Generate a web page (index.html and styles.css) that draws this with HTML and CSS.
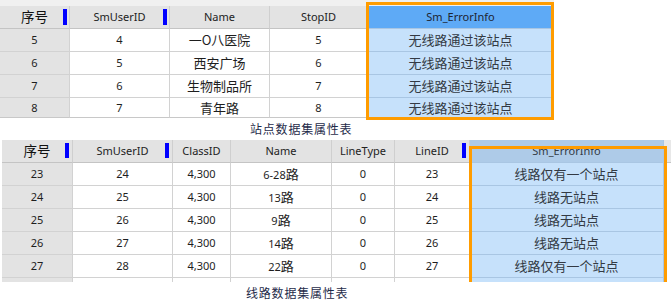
FILE: index.html
```html
<!DOCTYPE html>
<html lang="zh">
<head>
<meta charset="utf-8">
<link rel="stylesheet" href="styles.css">
</head>
<body>
<section class="view view-top">
  <table class="grid grid-top">
    <colgroup>
      <col class="c70"><col class="c100"><col class="c100"><col class="c98"><col class="c186">
    </colgroup>
    <thead>
      <tr>
        <th class="idx"><span class="cn h">序号</span><i class="mark"></i></th>
        <th>SmUserID<i class="mark"></i></th>
        <th>Name</th>
        <th>StopID</th>
        <th class="err sel">Sm_ErrorInfo</th>
      </tr>
    </thead>
    <tbody>
      <tr><td class="idx">5</td><td>4</td><td class="cn">一O八医院</td><td>5</td><td class="err cn">无线路通过该站点</td></tr>
      <tr><td class="idx">6</td><td>5</td><td class="cn">西安广场</td><td>6</td><td class="err cn">无线路通过该站点</td></tr>
      <tr><td class="idx">7</td><td>6</td><td class="cn">生物制品所</td><td>7</td><td class="err cn">无线路通过该站点</td></tr>
      <tr class="last"><td class="idx">8</td><td>7</td><td class="cn">青年路</td><td>8</td><td class="err cn">无线路通过该站点</td></tr>
    </tbody>
  </table>
  <div class="hl hl-top"></div>
</section>
<p class="caption cap-top">站点数据集属性表</p>

<section class="view view-bottom">
  <table class="grid grid-bottom">
    <colgroup>
      <col class="b71"><col class="b100"><col class="b58"><col class="b101"><col class="b63"><col class="b75"><col class="b194"><col class="brest">
    </colgroup>
    <thead>
      <tr>
        <th class="idx"><span class="cn h">序号</span><i class="mark"></i></th>
        <th>SmUserID<i class="mark"></i></th>
        <th>ClassID</th>
        <th>Name</th>
        <th>LineType</th>
        <th>LineID<i class="mark"></i></th>
        <th class="err">Sm_ErrorInfo</th>
        <th class="rest"></th>
      </tr>
    </thead>
    <tbody>
      <tr><td class="idx">23</td><td>24</td><td>4,300</td><td>6-28<span class="cn">路</span></td><td>0</td><td>23</td><td class="err cn">线路仅有一个站点</td><td class="rest"></td></tr>
      <tr><td class="idx">24</td><td>25</td><td>4,300</td><td>13<span class="cn">路</span></td><td>0</td><td>24</td><td class="err cn">线路无站点</td><td class="rest"></td></tr>
      <tr><td class="idx">25</td><td>26</td><td>4,300</td><td>9<span class="cn">路</span></td><td>0</td><td>25</td><td class="err cn">线路无站点</td><td class="rest"></td></tr>
      <tr><td class="idx">26</td><td>27</td><td>4,300</td><td>14<span class="cn">路</span></td><td>0</td><td>26</td><td class="err cn">线路无站点</td><td class="rest"></td></tr>
      <tr><td class="idx">27</td><td>28</td><td>4,300</td><td>22<span class="cn">路</span></td><td>0</td><td>27</td><td class="err cn">线路仅有一个站点</td><td class="rest"></td></tr>
      <tr><td class="idx"></td><td></td><td></td><td></td><td></td><td></td><td class="err"></td><td class="rest"></td></tr>
    </tbody>
  </table>
  <div class="hl hl-bottom"></div>
</section>
<p class="caption cap-bottom">线路数据集属性表</p>
</body>
</html>
```

FILE: styles.css
```css
html, body {
  margin: 0;
  padding: 0;
  background: #ffffff;
}
body {
  width: 671px;
  height: 303px;
  overflow: hidden;
  font-family: "Noto Sans", "Noto Sans CJK SC", sans-serif;
  font-size: 11px;
  color: #1e1e1e;
}
.view {
  position: relative;
  overflow: hidden;
}
.view-top {
  width: 554px;
  height: 120px;
  padding-top: 6px;
  box-sizing: border-box;
  background: linear-gradient(#f0f0f0 0 6px, #ffffff 6px);
}
.view-bottom {
  margin-top: 0;
  height: 142px;
  padding-left: 2px;
}
.grid {
  border-collapse: separate;
  border-spacing: 0;
  table-layout: fixed;
}
.grid-top { width: 554px; }
.grid-bottom { width: 669px; }
.c70 { width: 70px; }
.c100 { width: 100px; }
.c98 { width: 98px; }
.c186 { width: 186px; }
.b71 { width: 71px; }
.b100 { width: 100px; }
.b58 { width: 58px; }
.b101 { width: 101px; }
.b63 { width: 63px; }
.b75 { width: 75px; }
.b194 { width: 194px; }
.brest { width: 7px; }

.grid th, .grid td {
  padding: 0;
  text-align: center;
  vertical-align: middle;
  border-right: 1px solid #d2d2d2;
  border-bottom: 1px solid #d2d2d2;
  white-space: nowrap;
  overflow: hidden;
  line-height: 16px;
}
.grid th {
  position: relative;
  height: 22px;
  background: #e3e3e3;
  font-weight: normal;
  color: #222222;
  border-right-color: #cfcfcf;
  border-bottom-color: #c4c4c4;
}
.grid td {
  height: 22px;
  background: #ffffff;
}
.grid-top tr.last td {
  height: 19px;
  border-bottom-color: #c8c8c8;
}
.grid td.idx {
  background: #e3e3e3;
}
.grid th.err, .grid td.err {
  background: #c6e1fb;
  border-right-color: #a9c6e3;
  border-bottom-color: #a9c6e3;
  color: #333a44;
}
.grid th.err {
  background: #aecbe8;
  color: #333a44;
}
.grid th.err.sel {
  background: #5eaaf6;
  color: #1d2430;
}
.grid th.rest {
  background: #e8e8e8;
  border-right: none;
}
.grid td.rest {
  background: #ffffff;
  border-right: none;
  border-bottom: none;
}
.cn {
  font-family: "Noto Sans CJK SC", sans-serif;
  font-size: 13px;
}
.cn.h {
  font-size: 13.5px;
  color: #111111;
}
.mark {
  position: absolute;
  right: 2px;
  top: 3px;
  width: 4px;
  height: 16px;
  background: #0000ff;
}
.grid-bottom .mark {
  top: 3px;
  height: 15px;
  right: 3px;
}
.hl {
  position: absolute;
  box-sizing: border-box;
  border: 3px solid #ff9c00;
}
.hl-top {
  left: 366px;
  top: 2px;
  width: 188px;
  height: 118px;
}
.hl-bottom {
  left: 469px;
  top: 6px;
  width: 198px;
  height: 160px;
}
.caption {
  margin: 0;
  font-family: "Noto Sans CJK SC", sans-serif;
  font-size: 12px;
  letter-spacing: 0.8px;
  color: #1f2c4a;
  line-height: 16px;
}
.cap-top {
  height: 20px;
  padding-left: 250px;
  padding-top: 1px;
  box-sizing: border-box;
}
.cap-bottom {
  padding-left: 246px;
  padding-top: 3px;
}
```
